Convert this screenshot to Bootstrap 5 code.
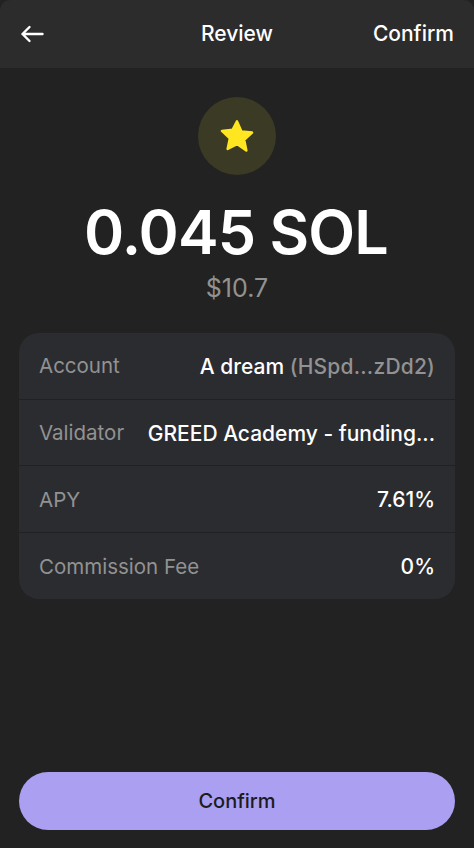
<!DOCTYPE html>
<html lang="en">
<head>
<meta charset="utf-8">
<meta name="viewport" content="width=device-width, initial-scale=1">
<link href="https://cdn.jsdelivr.net/npm/bootstrap@5.3.0/dist/css/bootstrap.min.css" rel="stylesheet">
<style>
html, body { height: 100%; background: #222222; }
body { font-family: Inter, "Liberation Sans", sans-serif; color: #fff; }
.screen { height: 848px; background: #222222; }
.topbar { height: 68px; background: #2c2c2c; padding: 0 20px; border-radius: 10px 10px 0 0; font-size: 21px; font-weight: 500; }
.topbar-side { width: 90px; }
.back-btn { color: #fff; padding: 0; border: 0; background: none; line-height: 0; display: block; }
.back-btn svg { width: 24px; height: 24px; }
.confirm-link { color: #fff; }
.star-disc { width: 78px; height: 78px; margin-top: 29px; background: #3b3a25; }
.star-disc svg { width: 38px; height: 38px; }
.amount { font-size: 61px; line-height: 74px; font-weight: 600; letter-spacing: -.9px; margin-top: 20px; margin-bottom: 0; padding-right: 2px; }
.amount-usd { font-size: 25px; line-height: 32px; color: #929292; margin-top: 3px; }
.detail-card { margin: 29px 19px 0; background: #2b2c30; border-radius: 20px; overflow: hidden; }
.detail-row { height: 66.6px; padding: 2px 20px 0; font-size: 20.5px; border-bottom: 1px solid #202124; }
.detail-row:last-child { border-bottom: 0; }
.detail-label { color: #929292; white-space: nowrap; }
.detail-value { font-size: 21px; font-weight: 500; color: #fff; white-space: nowrap; }
.detail-muted { color: #929292; letter-spacing: .2px; }
.action-wrap { padding: 0 19px 18px; }
.action-btn { height: 58px; padding-top: 6px; border-radius: 29px; background: #ab9ff2; border: 0; color: #1c1c1c; font-size: 20px; font-weight: 500; }
.action-btn:hover { background: #ab9ff2; color: #1c1c1c; }
</style>
</head>
<body>
<div class="screen d-flex flex-column">
  <header class="topbar d-flex align-items-center justify-content-between">
    <div class="topbar-side">
      <button type="button" class="back-btn" aria-label="Back">
        <svg viewBox="0 0 24 24" fill="none" stroke="#fff" stroke-width="2.4" stroke-linecap="round" stroke-linejoin="round"><path d="M22.5 12H2.5M9.5 5L2.5 12L9.5 19"/></svg>
      </button>
    </div>
    <div>Review</div>
    <div class="topbar-side text-end confirm-link">Confirm</div>
  </header>
  <main class="flex-grow-1 d-flex flex-column">
    <div class="star-disc rounded-circle d-flex align-items-center justify-content-center align-self-center">
      <svg viewBox="0 0 24 24"><path fill="#ffe620" stroke="#ffe620" stroke-width="1.6" stroke-linejoin="round" d="M12 2.8l2.8 6.3 6.7.7-5 4.6 1.4 6.8L12 17.1l-5.9 3.1 1.4-6.8-5-4.6 6.7-.7z"/></svg>
    </div>
    <h1 class="amount text-center">0.045 SOL</h1>
    <div class="amount-usd text-center">$10.7</div>
    <div class="detail-card">
      <div class="detail-row d-flex align-items-center justify-content-between">
        <span class="detail-label">Account</span>
        <span class="detail-value">A dream <span class="detail-muted">(HSpd...zDd2)</span></span>
      </div>
      <div class="detail-row d-flex align-items-center justify-content-between">
        <span class="detail-label">Validator</span>
        <span class="detail-value">GREED Academy - funding...</span>
      </div>
      <div class="detail-row d-flex align-items-center justify-content-between">
        <span class="detail-label">APY</span>
        <span class="detail-value">7.61%</span>
      </div>
      <div class="detail-row d-flex align-items-center justify-content-between">
        <span class="detail-label">Commission Fee</span>
        <span class="detail-value">0%</span>
      </div>
    </div>
    <div class="action-wrap mt-auto">
      <button type="button" class="btn action-btn w-100">Confirm</button>
    </div>
  </main>
</div>
<script src="https://cdn.jsdelivr.net/npm/bootstrap@5.3.0/dist/js/bootstrap.bundle.min.js"></script>
</body>
</html>
